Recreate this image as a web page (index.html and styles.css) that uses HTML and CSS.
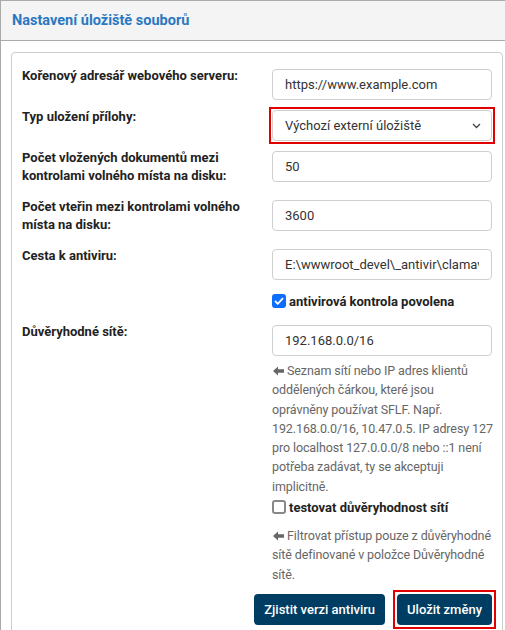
FILE: index.html
```html
<!DOCTYPE html>
<html lang="cs">
<head>
<meta charset="utf-8">
<link rel="stylesheet" href="styles.css">
</head>
<body>
<div class="panel">
  <div class="panel-head">Nastavení úložiště souborů</div>
  <div class="panel-body">
    <div class="box">
      <div class="row">
        <label class="lbl">Kořenový adresář webového serveru:</label>
        <div class="ctl"><input class="inp" type="text" value="https://www.example.com"></div>
      </div>
      <div class="row">
        <label class="lbl">Typ uložení přílohy:</label>
        <div class="ctl">
          <div class="sel hl">
            <span>Výchozí externí úložiště</span>
            <svg class="chev" width="9" height="6" viewBox="0 0 9 6"><path d="M1 1l3.5 3.5L8 1" fill="none" stroke="#444" stroke-width="1.3"/></svg>
          </div>
        </div>
      </div>
      <div class="row">
        <label class="lbl">Počet vložených dokumentů mezi kontrolami volného místa na disku:</label>
        <div class="ctl"><input class="inp" type="text" value="50"></div>
      </div>
      <div class="row">
        <label class="lbl">Počet vteřin mezi kontrolami volného místa na disku:</label>
        <div class="ctl"><input class="inp" type="text" value="3600"></div>
      </div>
      <div class="row">
        <label class="lbl">Cesta k antiviru:</label>
        <div class="ctl"><input class="inp" type="text" value="E:\wwwroot_devel\_antivir\clamav_1.0.1\clamscan.exe"></div>
      </div>
      <div class="row row-check">
        <div></div>
        <div class="ctl check"><span class="cb on"><svg width="10" height="8" viewBox="0 0 10 8"><path d="M1 4l2.8 2.8L9 1.2" fill="none" stroke="#fff" stroke-width="1.8"/></svg></span><span class="cbt">antivirová kontrola povolena</span></div>
      </div>
      <div class="row">
        <label class="lbl">Důvěryhodné sítě:</label>
        <div class="ctl">
          <input class="inp" type="text" value="192.168.0.0/16">
          <p class="help"><svg class="arr" width="11" height="10" viewBox="0 0 11 10"><path d="M0 5L5 0.5V3.3H11V6.7H5V9.5Z" fill="#666"/></svg>Seznam sítí nebo IP adres klientů<br>oddělených čárkou, které jsou<br>oprávněny používat SFLF. Např.<br>192.168.0.0/16, 10.47.0.5. IP adresy 127<br>pro localhost 127.0.0.0/8 nebo ::1 není<br>potřeba zadávat, ty se akceptuji<br>implicitně.</p>
          <div class="check check2"><span class="cb"></span><span class="cbt">testovat důvěryhodnost sítí</span></div>
          <p class="help help2"><svg class="arr" width="11" height="10" viewBox="0 0 11 10"><path d="M0 5L5 0.5V3.3H11V6.7H5V9.5Z" fill="#666"/></svg>Filtrovat přístup pouze z důvěryhodné<br>sítě definované v položce Důvěryhodné<br>sítě.</p>
        </div>
      </div>
      <div class="actions">
        <button class="btn">Zjistit verzi antiviru</button>
        <button class="btn hl">Uložit změny</button>
      </div>
    </div>
  </div>
</div>
</body>
</html>
```

FILE: styles.css
```css
html, body {
  margin: 0;
  padding: 0;
  background: #fff;
  overflow: hidden;
}
body {
  font-family: Roboto, "Liberation Sans", sans-serif;
  color: #222;
  width: 505px;
  height: 630px;
}
.panel {
  width: 540px;
  border: 1px solid #aaa;
  box-sizing: border-box;
}
.panel-head {
  background: #f4f4f4;
  height: 40px;
  border-bottom: 1px solid #aaa;
  box-sizing: border-box;
  padding-left: 11px;
  font-size: 14.5px;
  font-weight: 700;
  color: #2b78c2;
  line-height: 40px;
}
.panel-body {
  padding: 11px 0 0 10px;
}
.box {
  width: 492px;
  box-sizing: border-box;
  border: 1px solid #ccc;
  border-radius: 4px;
  padding: 16px 10px 20px 10px;
}
.row {
  display: grid;
  grid-template-columns: 1fr 220px;
  column-gap: 11px;
  margin-bottom: 10px;
}
.lbl {
  font-size: 13px;
  font-weight: 700;
  line-height: 18px;
  margin-top: -2px;
  padding-bottom: 5px;
  color: #222;
}
.ctl {
  min-width: 0;
}
.inp, .sel {
  display: block;
  width: 100%;
  height: 31px;
  box-sizing: border-box;
  border: 1px solid #cfcfcf;
  border-radius: 4px;
  padding: 0 12px;
  font-family: Roboto, "Liberation Sans", sans-serif;
  font-size: 13px;
  color: #333;
  background: #fff;
  outline: none;
}
.sel {
  display: flex;
  align-items: center;
  justify-content: space-between;
}
.chev {
  margin-right: -2px;
}
.hl {
  position: relative;
}
.hl::after {
  content: "";
  position: absolute;
  inset: -4px;
  border: 2px solid #e30000;
  pointer-events: none;
}
.row-check {
  margin-top: 1px;
  margin-bottom: 13px;
}
.check {
  display: flex;
  align-items: center;
  gap: 3px;
  height: 22px;
}
.cb {
  width: 14px;
  height: 14px;
  box-sizing: border-box;
  border-radius: 3px;
  border: 2px solid #888;
  background: #fff;
  display: flex;
  align-items: center;
  justify-content: center;
}
.cb.on {
  background: #0d6efd;
  border-color: #0d6efd;
}
.cbt {
  font-size: 13px;
  font-weight: 700;
  color: #222;
}
.help {
  margin: 5px 0 0 0;
  font-size: 12.5px;
  line-height: 19.3px;
  color: #666;
  letter-spacing: -0.1px;
  white-space: nowrap;
}
.help2 {
  margin-top: 8px;
}
.arr {
  margin: 0 3px 0 1px;
  vertical-align: -1px;
}
.check2 {
  margin-top: 0;
}
.actions {
  display: flex;
  justify-content: flex-end;
  gap: 12px;
}
.btn {
  height: 31px;
  border: none;
  border-radius: 4px;
  background: #003d62;
  color: #fff;
  font-family: Roboto, "Liberation Sans", sans-serif;
  font-size: 13px;
  font-weight: 500;
  padding: 0 10px;
}
```
